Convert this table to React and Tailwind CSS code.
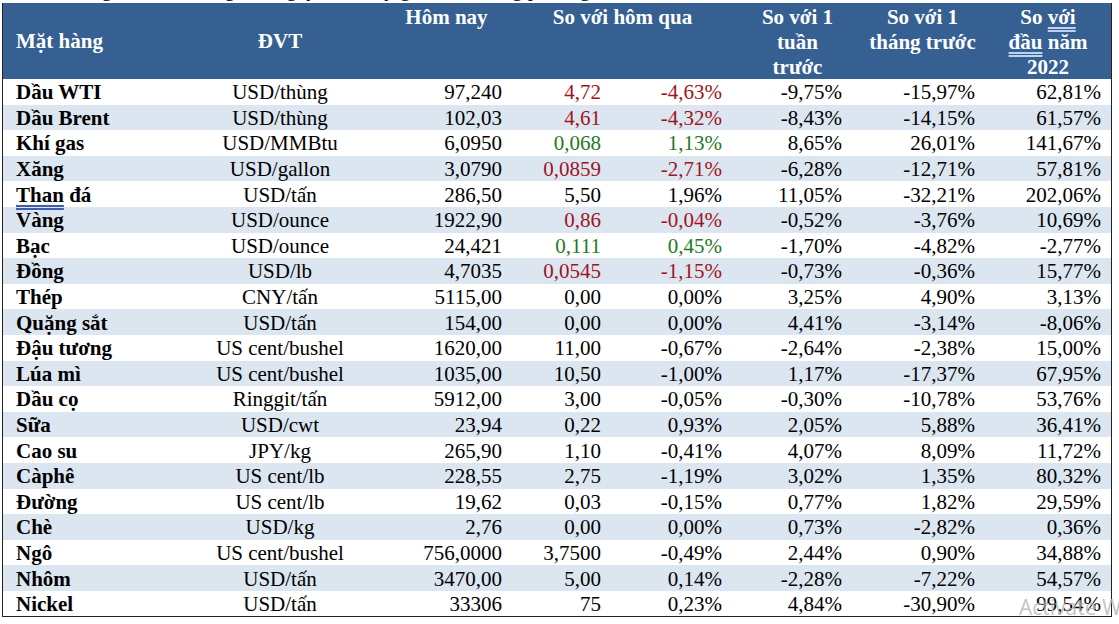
import React from "react";

const R = "text-[#a0141c]";
const G = "text-[#1f7a1f]";

const rows = [
  ["Dầu WTI", "USD/thùng", "97,240", "4,72", "-4,63%", "-9,75%", "-15,97%", "62,81%", R],
  ["Dầu Brent", "USD/thùng", "102,03", "4,61", "-4,32%", "-8,43%", "-14,15%", "61,57%", R],
  ["Khí gas", "USD/MMBtu", "6,0950", "0,068", "1,13%", "8,65%", "26,01%", "141,67%", G],
  ["Xăng", "USD/gallon", "3,0790", "0,0859", "-2,71%", "-6,28%", "-12,71%", "57,81%", R],
  ["Than đá", "USD/tấn", "286,50", "5,50", "1,96%", "11,05%", "-32,21%", "202,06%", ""],
  ["Vàng", "USD/ounce", "1922,90", "0,86", "-0,04%", "-0,52%", "-3,76%", "10,69%", R],
  ["Bạc", "USD/ounce", "24,421", "0,111", "0,45%", "-1,70%", "-4,82%", "-2,77%", G],
  ["Đồng", "USD/lb", "4,7035", "0,0545", "-1,15%", "-0,73%", "-0,36%", "15,77%", R],
  ["Thép", "CNY/tấn", "5115,00", "0,00", "0,00%", "3,25%", "4,90%", "3,13%", ""],
  ["Quặng sắt", "USD/tấn", "154,00", "0,00", "0,00%", "4,41%", "-3,14%", "-8,06%", ""],
  ["Đậu tương", "US cent/bushel", "1620,00", "11,00", "-0,67%", "-2,64%", "-2,38%", "15,00%", ""],
  ["Lúa mì", "US cent/bushel", "1035,00", "10,50", "-1,00%", "1,17%", "-17,37%", "67,95%", ""],
  ["Dầu cọ", "Ringgit/tấn", "5912,00", "3,00", "-0,05%", "-0,30%", "-10,78%", "53,76%", ""],
  ["Sữa", "USD/cwt", "23,94", "0,22", "0,93%", "2,05%", "5,88%", "36,41%", ""],
  ["Cao su", "JPY/kg", "265,90", "1,10", "-0,41%", "4,07%", "8,09%", "11,72%", ""],
  ["Càphê", "US cent/lb", "228,55", "2,75", "-1,19%", "3,02%", "1,35%", "80,32%", ""],
  ["Đường", "US cent/lb", "19,62", "0,03", "-0,15%", "0,77%", "1,82%", "29,59%", ""],
  ["Chè", "USD/kg", "2,76", "0,00", "0,00%", "0,73%", "-2,82%", "0,36%", ""],
  ["Ngô", "US cent/bushel", "756,0000", "3,7500", "-0,49%", "2,44%", "0,90%", "34,88%", ""],
  ["Nhôm", "USD/tấn", "3470,00", "5,00", "0,14%", "-2,28%", "-7,22%", "54,57%", ""],
  ["Nickel", "USD/tấn", "33306", "75", "0,23%", "4,84%", "-30,90%", "99,54%", ""],
];

const cols = "grid grid-cols-[162px_230px_115px_102px_123px_125px_125px_126px]";

const App = () => {
  return (
    <div
      className="relative w-[1119px] h-[624px] overflow-hidden bg-white"
      style={{ fontFamily: '"Liberation Serif", "Times New Roman", serif' }}
    >
      {/* title line, only the tails of its letters show */}
      <div className="h-[3px] overflow-hidden flex items-end pl-[14px]">
        <div className="text-[21px] leading-[28px] text-black whitespace-nowrap">
          Diễn biến giá một số hàng hóa ngày hôm nay ghi nhận trong phiên giao dịch
        </div>
      </div>

      <div className="ml-[2px] w-[1110px] border-x border-b border-[#222]">
        {/* Header */}
        <div className={`${cols} h-[76px] bg-[#366092] text-white font-bold text-[21px] leading-[25px]`}>
          <div className="flex items-center pl-[13px]">Mặt hàng</div>
          <div className="flex items-center justify-center">ĐVT</div>
          <div className="pt-[2px] text-center pr-[12px]">Hôm nay</div>
          <div className="col-span-2 pt-[2px] text-center">So với hôm qua</div>
          <div className="pt-[2px] text-center">
            So với 1<br />tuần<br />trước
          </div>
          <div className="pt-[2px] text-center">
            So với 1<br />tháng trước
          </div>
          <div className="pt-[2px] text-center">
            So{" "}
            <span className="underline decoration-double decoration-[#bcd3f0] underline-offset-[3px]">với</span>
            <br />
            <span className="underline decoration-double decoration-[#bcd3f0] underline-offset-[3px]">đầu</span> năm
            <br />
            2022
          </div>
        </div>

        {/* Body */}
        {rows.map((r, i) => (
          <div
            key={r[0]}
            className={`${cols} h-[25.6px] items-center pt-[1px] text-[21px] leading-[24px] text-black ${
              i % 2 === 1 ? "bg-[#dce6f1]" : "bg-white"
            }`}
          >
            <div className="pl-[13px] font-bold whitespace-nowrap">
              {r[0] === "Than đá" ? (
                <>
                  <span className="underline decoration-double decoration-[#3b5fb0] underline-offset-[3px]">Than</span> đá
                </>
              ) : (
                r[0]
              )}
            </div>
            <div className="text-center whitespace-nowrap">{r[1]}</div>
            <div className="text-right pr-[8px]">{r[2]}</div>
            <div className={`text-right pr-[11px] ${r[8]}`}>{r[3]}</div>
            <div className={`text-right pr-[13px] ${r[8]}`}>{r[4]}</div>
            <div className="text-right pr-[18px]">{r[5]}</div>
            <div className="text-right pr-[10px]">{r[6]}</div>
            <div className="text-right pr-[10px]">{r[7]}</div>
          </div>
        ))}
      </div>

      {/* OS watermark over the corner */}
      <div
        className="absolute left-[1019px] top-[592px] text-[21px] text-[#b4b4b4]/80 whitespace-nowrap"
        style={{ fontFamily: '"Open Sans", "Noto Sans", sans-serif' }}
      >
        Activate Windows
      </div>
    </div>
  );
};

export default App;
